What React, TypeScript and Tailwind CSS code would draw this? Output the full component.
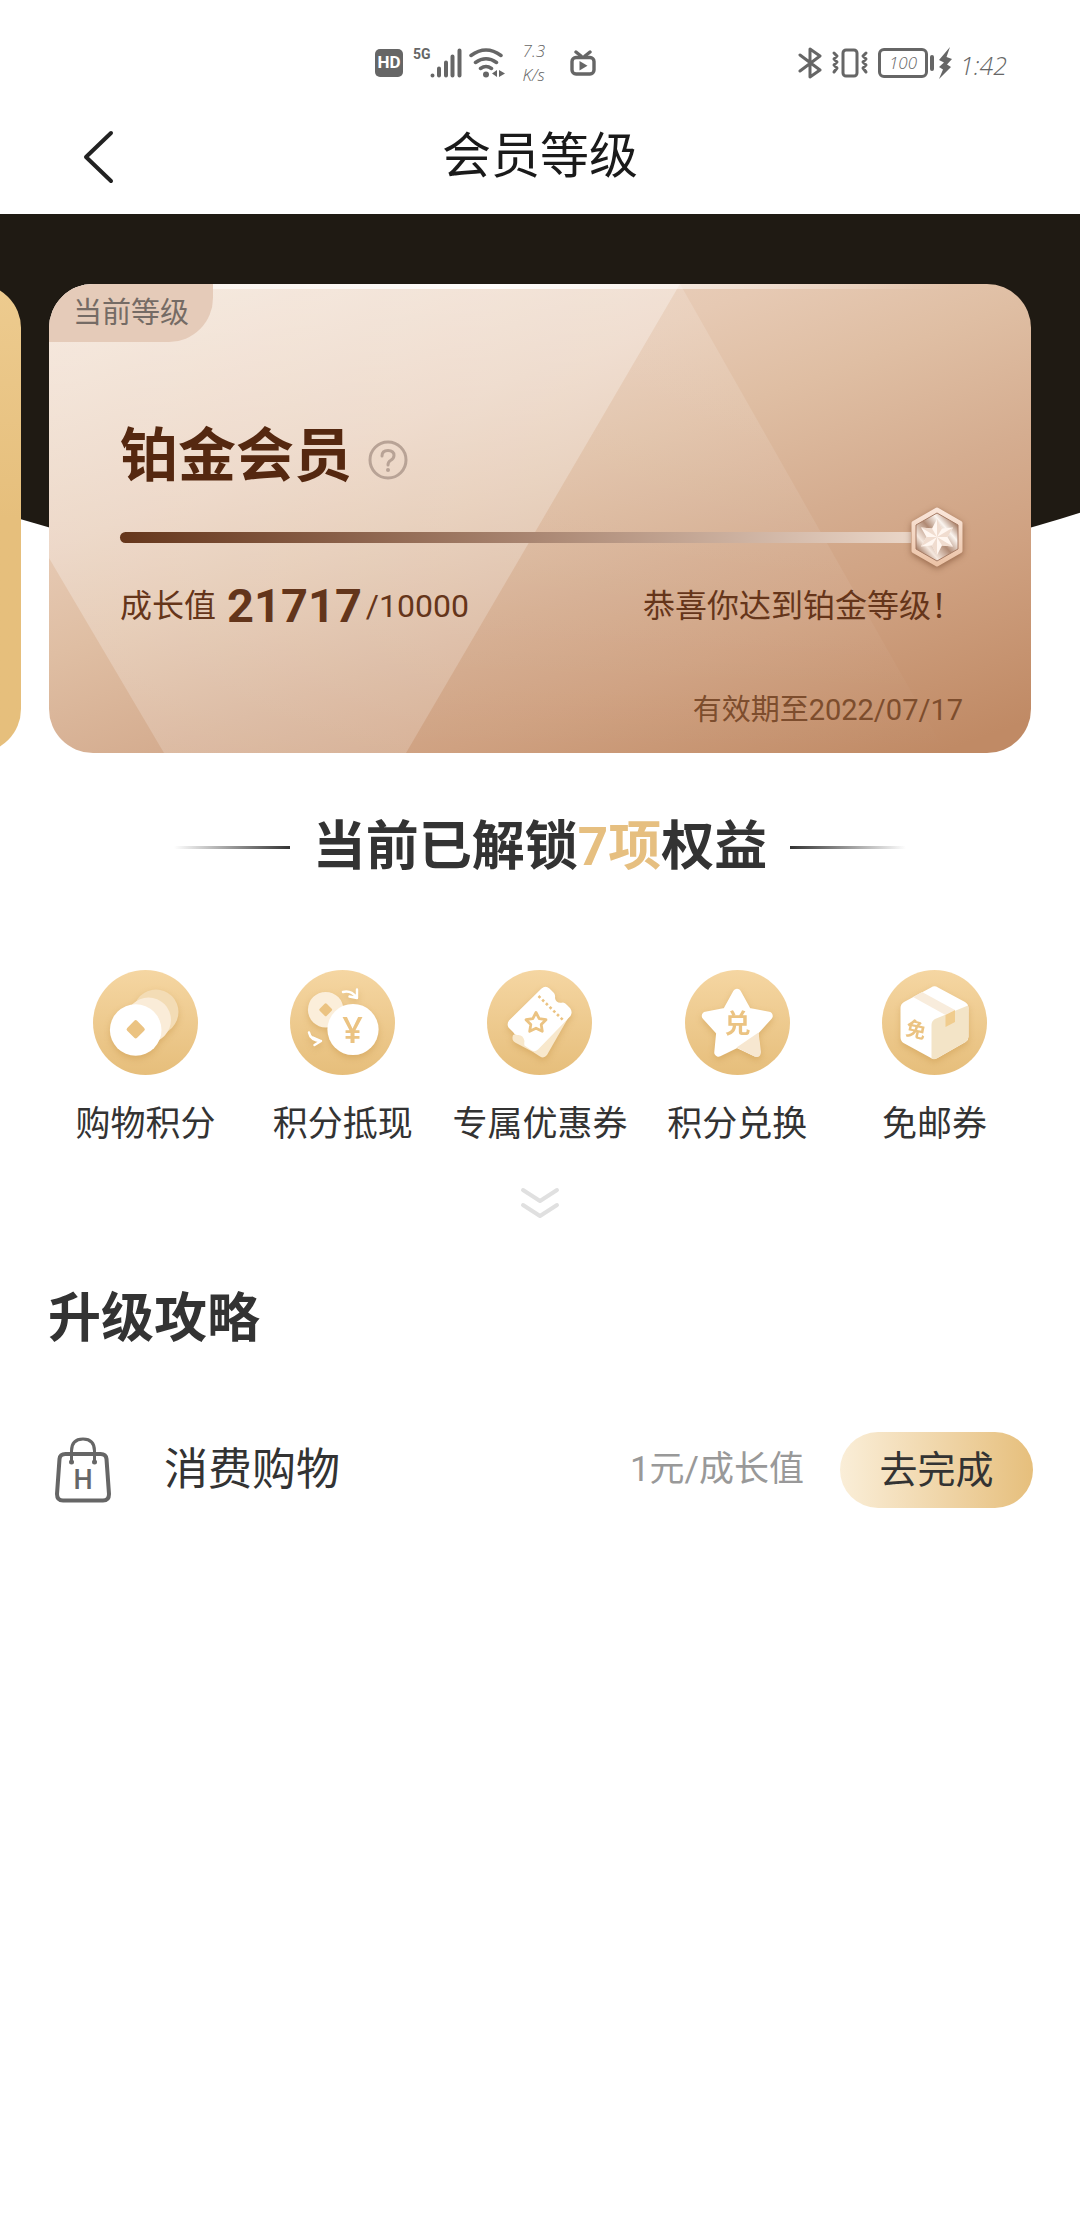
import type { ReactNode } from "react";

interface Benefit { label: string; icon: ReactNode; }

const GOLD = "#ebc382";

function Disc({ children }: { children: ReactNode }) {
  return (
    <svg viewBox="0 0 105 105" className="size-[105px]" aria-hidden="true">
      <defs>
        <linearGradient id="disc" x1="0" y1="0" x2="0" y2="1">
          <stop offset="0" stopColor="#f5d6a2" />
          <stop offset="1" stopColor="#e6be7b" />
        </linearGradient>
      </defs>
      <circle cx="52.5" cy="52.5" r="52.5" fill="url(#disc)" />
      <g className="[filter:drop-shadow(0_3px_3px_rgba(196,142,62,0.4))]">{children}</g>
    </svg>
  );
}

const benefits: Benefit[] = [
  {
    label: "购物积分",
    icon: (
      <Disc>
        <circle cx="63" cy="42" r="22.5" fill="#f3dcb5" />
        <circle cx="55.5" cy="50" r="22.5" fill="#faecd8" />
        <circle cx="42.7" cy="60" r="25.8" fill="#fff" />
        <rect x="35.7" y="52.3" width="14" height="14" rx="2" transform="rotate(45 42.7 59.3)" fill={GOLD} />
      </Disc>
    ),
  },
  {
    label: "积分抵现",
    icon: (
      <Disc>
        <circle cx="35.7" cy="39.7" r="17.8" fill="#fbeeda" />
        <rect x="30.7" y="34.7" width="10" height="10" rx="1.5" transform="rotate(45 35.7 39.7)" fill={GOLD} />
        <circle cx="63" cy="59.5" r="25.6" fill="#fff" />
        <text x="62.5" y="73" textAnchor="middle" fontSize="36" fontWeight="600" fontFamily="'Open Sans', sans-serif" fill={GOLD}>¥</text>
        <path d="M53 22Q61 20 66.5 27.5M67 19.5V28L59.5 26.5M19 62.5Q20.5 70.5 31 71M23 67.5L31 71L24.5 75" fill="none" stroke="#fff" strokeWidth="2.4" strokeLinecap="round" strokeLinejoin="round" />
      </Disc>
    ),
  },
  {
    label: "专属优惠券",
    icon: (
      <Disc>
        <path d="M84 43L60 85Q57 89 53 86.5L46 82L29 73Q24 71 26 65Z" fill="#f8e8cc" />
        <path d="M54.5 18.5Q58.5 15 62.5 18.5L67 23Q68.5 25 68 28Q69 34 76 32.5Q78 32.5 80 35L83 38Q86 42 83.5 46L51 79.5Q47.5 82.5 44 80L37.5 75.5Q37 73 37.5 71Q36 64 30 65Q27.5 65 26 62L21.5 57.5Q19.5 54 22 50.5Z" fill="#fff" />
        <path d="M51.5 26L77 51" stroke={GOLD} strokeWidth="2.6" strokeDasharray="2.6 2.6" fill="none" />
        <path d="M49 42.5L52.2 48.7L59 49.7L54.2 54.6L55.3 61.3L49 58.2L42.7 61.3L43.8 54.6L39 49.7L45.8 48.7Z" fill="none" stroke={GOLD} strokeWidth="2.8" strokeLinejoin="round" />
      </Disc>
    ),
  },
  {
    label: "积分兑换",
    icon: (
      <Disc>
        <path d="M52 23L62.5 42L83.5 46L69 62L71 82.5L52 73.5L33.5 82.5L35.5 62L21 46L41.5 42Z" fill="#fff" stroke="#fff" strokeWidth="8.5" strokeLinejoin="round" />
        <path d="M73.5 62.5L51.5 77.5L69.5 86.5Q75.5 88.5 76 82Z" fill="#f7e7d0" />
        <text x="52.5" y="63" textAnchor="middle" fontSize="26" fontWeight="700" fontFamily="'Noto Sans CJK SC', sans-serif" fill={GOLD}>兑</text>
      </Disc>
    ),
  },
  {
    label: "免邮券",
    icon: (
      <Disc>
        <path d="M49 17.5Q52.5 15 56 17.5L83 32Q86.5 34 86.5 38V67Q86.5 70 83.5 72L55.5 88Q52 90 49 88L21.5 73Q18.5 71 18.5 67V38Q18.5 34 22 32Z" fill="#fff" />
        <path d="M86 35.5V67Q86.5 70 83.5 72L55.5 88Q52.5 90 49.5 88.5V55Q49.5 51 53 49Z" fill="#f3e4c7" />
        <path d="M31 27L40 22L73 40L63.5 45Z" fill="#f8ecdc" />
        <path d="M63.5 45L73 40V52L63.5 57Z" fill="#f0cc8e" />
        <text x="34" y="67" textAnchor="middle" fontSize="20" fontWeight="700" transform="rotate(12 34 60)" fontFamily="'Noto Sans CJK SC', sans-serif" fill={GOLD}>免</text>
      </Disc>
    ),
  },
];

function StatusBar() {
  return (
    <div className="flex h-[100px] items-center justify-between pt-[26px] pr-[73px] pl-[375px] text-[#666]">
      <div className="flex items-center">
        <span className="flex size-7 items-center justify-center rounded-[5px] bg-[#666] font-[Roboto] text-[17px] font-bold text-white">HD</span>
        <span className="ml-[10px] pb-[18px] font-[Roboto] text-[14px] leading-4 font-bold">5G</span>
        <svg viewBox="0 0 32 30" className="-ml-px h-[30px] w-8" aria-hidden="true">
          <path d="M2.5 27.5V27.5M9 27.5V20.5M16 27.5V14.5M22.5 27.5V8.5M29.5 27.5V2.5" stroke="currentColor" strokeWidth="4" strokeLinecap="round" />
        </svg>
        <svg viewBox="0 0 36 30" className="ml-[7px] h-[30px] w-9" fill="none" stroke="currentColor" strokeWidth="3.5" strokeLinecap="round" aria-hidden="true">
          <path d="M2 7.5Q17 -3.5 32 7.5M6.5 14.5Q17 7 27.5 14.5M11.5 20.5Q17 16.5 22.5 20.5" />
          <circle cx="17" cy="26.5" r="3" fill="currentColor" stroke="none" />
          <path d="M28 22V29L23 25.5ZM30 22V29L36 25.5Z" fill="currentColor" stroke="none" />
        </svg>
        <div className="ml-[18px] w-7 font-['Open_Sans'] text-[17px] leading-6 font-light italic">
          <p>7.3</p>
          <p>K/s</p>
        </div>
        <svg viewBox="0 0 26 26" className="ml-[19px] size-[26px]" fill="none" stroke="currentColor" strokeWidth="3.4" strokeLinecap="round" aria-hidden="true">
          <path d="M6 2L11 6M20 2L15 6" />
          <rect x="2" y="7.5" width="22" height="16.5" rx="4" />
          <path d="M9.5 11V20.5L17.5 15.7Z" fill="currentColor" stroke="none" />
        </svg>
      </div>
      <div className="flex items-center">
        <svg viewBox="0 0 24 32" className="h-8 w-6" fill="none" stroke="currentColor" strokeWidth="3" strokeLinecap="round" strokeLinejoin="round" aria-hidden="true">
          <path d="M2 8L22 23L12 30V2L22 9L2 24" />
        </svg>
        <svg viewBox="0 0 38 30" className="ml-[9px] h-[30px] w-[38px]" fill="none" stroke="currentColor" strokeWidth="3" strokeLinecap="round" strokeLinejoin="round" aria-hidden="true">
          <rect x="12" y="2" width="14" height="26" rx="3" />
          <path d="M3 5L6 8L3 11L6 14L3 17L6 20L3 24M35 5L32 8L35 11L32 14L35 17L32 20L35 24" />
        </svg>
        <span className="ml-[9px] flex h-[30px] w-[50px] items-center justify-center rounded-md border-3 border-[#666] font-['Open_Sans'] text-[17px] font-light italic">100</span>
        <span className="ml-[2px] h-4 w-1 rounded-full bg-[#666]" />
        <svg viewBox="0 0 14 32" className="ml-1 h-8 w-3.5" fill="currentColor" aria-hidden="true">
          <path d="M12 0L1 13L6 15.5L1 20L5 22.5L1 32L13 20L9 17.5L14 12L8.5 10Z" />
        </svg>
        <span className="ml-2 pt-1 font-['Open_Sans'] text-[25px] leading-8 font-light italic">1:42</span>
      </div>
    </div>
  );
}

function Medal() {
  return (
    <svg viewBox="0 0 52 60" className="h-[60px] w-[52px] overflow-visible [filter:drop-shadow(0_2px_3px_rgba(96,48,20,0.5))]" aria-hidden="true">
      <defs>
        <linearGradient id="rim" x1="0" y1="0" x2="0" y2="1">
          <stop offset="0" stopColor="#fae6da" />
          <stop offset="1" stopColor="#ecc3a6" />
        </linearGradient>
        <linearGradient id="core" x1="1" y1="0" x2="0" y2="1">
          <stop offset="0.15" stopColor="#b08a74" />
          <stop offset="0.3" stopColor="#fbf5f0" />
          <stop offset="0.5" stopColor="#b08a74" />
          <stop offset="0.72" stopColor="#f5e8df" />
          <stop offset="0.88" stopColor="#a27a62" />
        </linearGradient>
      </defs>
      <path d="M26 2.5L49.5 16V44L26 57.5L2.5 44V16Z" fill="url(#rim)" stroke="url(#rim)" strokeWidth="4" strokeLinejoin="round" />
      <path d="M26 6L47 18V42L26 54L5 42V18Z" fill="url(#core)" stroke="#a67b64" strokeWidth="1" />
      <path d="M26 12L31 21.5L42 20.5L36.5 30L42 39.5L31 38.5L26 48L21 38.5L10 39.5L15.5 30L10 20.5L21 21.5Z" fill="#fff6f0" />
      <path d="M26 12V30L31 21.5ZM42 20.5L26 30H36.5ZM42 39.5L26 30L31 38.5ZM26 48V30L21 38.5ZM10 39.5L26 30H15.5ZM10 20.5L26 30L21 21.5Z" fill="#f0dccf" />
    </svg>
  );
}

function LevelCard() {
  return (
    <article className="relative w-full shrink-0 overflow-hidden rounded-[44px] bg-[linear-gradient(160deg,#f0dccb_0%,#e6c9b3_32%,#dfbea3_45%,#d5ad90_61%,#cfa181_74%,#c08a65_96%)] pb-[23px] text-[#65351a]">
      <svg viewBox="0 0 982 469" preserveAspectRatio="none" className="absolute inset-0 size-full" aria-hidden="true">
        <defs>
          <linearGradient id="facet" x1="0" y1="0" x2="0" y2="1">
            <stop offset="0" stopColor="#fff" stopOpacity="0.42" />
            <stop offset="1" stopColor="#fff" stopOpacity="0.18" />
          </linearGradient>
          <linearGradient id="facetMid" x1="0" y1="0" x2="0" y2="1">
            <stop offset="0" stopColor="#fff" stopOpacity="0.16" />
            <stop offset="1" stopColor="#fff" stopOpacity="0" />
          </linearGradient>
          <linearGradient id="shine" x1="0" y1="0" x2="1" y2="0">
            <stop offset="0.15" stopColor="#fff" stopOpacity="0.5" />
            <stop offset="0.45" stopColor="#fff" stopOpacity="0.9" />
            <stop offset="0.92" stopColor="#fff" stopOpacity="0" />
          </linearGradient>
        </defs>
        <path d="M0 0H631L357 469H115L0 274Z" fill="url(#facet)" />
        <path d="M631 0L357 469H897Z" fill="url(#facetMid)" />
        <rect width="982" height="5" fill="url(#shine)" />
      </svg>
      <div className="relative">
        <span className="flex h-[58px] w-[164px] items-center justify-center rounded-br-[44px] bg-[#e5cbb9] pt-[2px] text-[29px] text-[#756b65]">当前等级</span>
        <div className="pr-[68px] pl-[71px]">
          <div className="mt-[84px] flex items-center gap-4">
            <h2 className="text-[58px] leading-[60px] font-bold text-[#552810]">铂金会员</h2>
            <button type="button" aria-label="等级说明" className="mt-2 flex text-[#b8a396]">
              <svg viewBox="0 0 40 40" className="size-10" fill="none" stroke="currentColor" strokeWidth="3" strokeLinecap="round">
                <circle cx="20" cy="20" r="18" />
                <path d="M14 16Q14 10.5 20 10.5Q26 10.5 26 15.5Q26 18.5 22.5 20.5Q20 22 20 25" />
                <circle cx="20" cy="30" r="2" fill="currentColor" stroke="none" />
              </svg>
            </button>
          </div>
          <div className="mt-[22px] flex h-[58px] items-center">
            <div className="h-[11px] flex-1 rounded-l-full bg-linear-to-r from-[#65361b] to-[#ead6c8]" />
            <Medal />
          </div>
          <div className="mt-5 flex h-10 items-center justify-between text-[32px]">
            <p className="flex items-center">
              成长值
              <strong className="mr-1 ml-[11px] text-[47px] font-bold text-[#63351b]">21717</strong>
              /10000
            </p>
            <p>恭喜你达到铂金等级！</p>
          </div>
          <p className="mt-16 text-right text-[29px] leading-10 text-[#7d4d2d]">有效期至2022/07/17</p>
        </div>
      </div>
    </article>
  );
}

export default function App() {
  return (
    <div className="min-h-screen bg-white font-[Roboto,'Noto_Sans_CJK_SC',sans-serif] text-[#333]">
      <StatusBar />
      <header className="grid h-[114px] grid-cols-[1fr_auto_1fr] items-center px-20">
        <button type="button" aria-label="返回" className="justify-self-start">
          <svg viewBox="0 0 36 56" className="h-14 w-9" fill="none" stroke="#222" strokeWidth="4" strokeLinecap="round" strokeLinejoin="round">
            <path d="M31 4L6 28L31 52" />
          </svg>
        </button>
        <h1 className="text-[49px] text-[#1a1a1a]">会员等级</h1>
      </header>

      <main>
        <section className="relative overflow-hidden">
          <div className="absolute inset-x-0 top-0 h-96 bg-[#1f1a13] [clip-path:circle(1794px_at_50%_-1412px)]" />
          <div className="relative flex justify-end gap-7 px-[49px] pt-[70px]">
            <div className="w-full shrink-0 rounded-[44px] bg-linear-to-b from-[#edcb8f] to-[#e6bf7c] to-50%" />
            <LevelCard />
          </div>
        </section>

        <div className="mt-16 flex items-center justify-center gap-[23px]">
          <span className="h-[3px] w-[116px] bg-linear-to-l from-[#333] to-transparent" />
          <h2 className="text-[53px] leading-[60px] font-bold">
            当前已解锁<span className="text-[#e6bf80]">7项</span>权益
          </h2>
          <span className="h-[3px] w-[116px] bg-linear-to-r from-[#333] to-transparent" />
        </div>

        <ul className="mt-[93px] grid grid-cols-5 px-[47px]">
          {benefits.map((b) => (
            <li key={b.label} className="flex flex-col items-center gap-[30px]">
              {b.icon}
              <span className="text-[35px] leading-10 whitespace-nowrap">{b.label}</span>
            </li>
          ))}
        </ul>

        <button type="button" aria-label="展开更多权益" className="mx-auto mt-[41px] block">
          <svg viewBox="0 0 42 33" className="h-[33px] w-[42px]" fill="none" stroke="#e0e0e0" strokeWidth="4" strokeLinecap="round" strokeLinejoin="round">
            <path d="M4 4L21 15L38 4M4 19L21 30L38 19" />
          </svg>
        </button>

        <section className="mt-[70px] pr-[47px] pl-12">
          <h2 className="text-[53px] leading-[60px] font-bold">升级攻略</h2>
          <div className="mt-[83px] flex h-[76px] items-center">
            <svg viewBox="0 0 56 66" className="ml-[7px] h-[66px] w-14" fill="none" stroke="#666" aria-hidden="true">
              <path d="M10.5 17H45.5Q51 17 51.5 22L54 57Q54 63.5 48 63.5H8Q2 63.5 2 57L4.5 22Q5 17 10.5 17Z" strokeWidth="4" />
              <path d="M16.5 25V14Q16.500 2 28 2Q39.5 2 39.5 14V25" strokeWidth="3" />
              <circle cx="16.5" cy="25" r="2.5" fill="#666" stroke="none" />
              <circle cx="39.5" cy="25" r="2.5" fill="#666" stroke="none" />
              <text x="28" y="52" textAnchor="middle" fontSize="27" fontFamily="Roboto, sans-serif" fontWeight="500" fill="#666" stroke="none">H</text>
            </svg>
            <h3 className="ml-[53px] text-[44px]">消费购物</h3>
            <span className="ml-auto text-[35px] text-[#999]">1元/成长值</span>
            <button type="button" className="ml-9 h-[76px] w-[193px] rounded-full bg-linear-to-r from-[#faeed8] to-[#e6bf7c] text-[38px]">去完成</button>
          </div>
        </section>
      </main>
    </div>
  );
}
